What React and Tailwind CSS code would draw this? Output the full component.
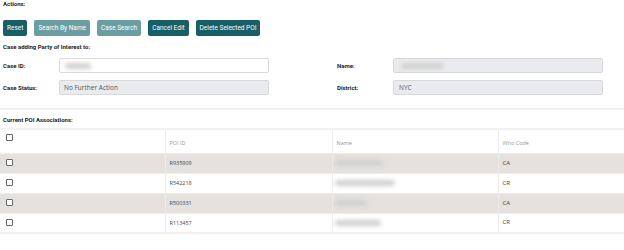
import React from "react";

const Btn = ({ children, light }) => (
  <button
    className={`h-[16px] px-[4px] rounded-[2px] text-white text-[6.5px] leading-none ${
      light ? "bg-[#6b9ea3]" : "bg-[#175e67]"
    }`}
  >
    {children}
  </button>
);

const Blur = ({ w }) => (
  <span className="inline-block align-middle h-[6px] rounded-full bg-[#d0d0d0] blur-[2px]" style={{ width: w }} />
);

const Box = () => (
  <span className="inline-block w-[7px] h-[7px] border border-[#666] rounded-[1px] bg-white" />
);

const rows = [
  { id: "R935909", n: 48, code: "CA" },
  { id: "R542218", n: 60, code: "CR" },
  { id: "R500331", n: 32, code: "CA" },
  { id: "R113457", n: 46, code: "CR" },
];

export default function App() {
  return (
    <div className="w-[624px] h-[250px] bg-white font-['Roboto',sans-serif] text-[#222] relative overflow-hidden">
      <div className="pl-[3px] pt-[1px] text-[6px] font-bold leading-[6px]">Actions:</div>
      <div className="flex gap-[7px] pl-[3px] mt-[13px]">
        <Btn>Reset</Btn>
        <Btn light>Search By Name</Btn>
        <Btn light>Case Search</Btn>
        <Btn>Cancel Edit</Btn>
        <Btn>Delete Selected POI</Btn>
      </div>
      <div className="pl-[3px] mt-[8px] text-[6px] font-bold leading-[6px]">Case adding Party of Interest to:</div>
      <div className="grid grid-cols-[56px_210px_68px_56px_210px] mt-[8px] pl-[3px] gap-y-[7px] items-center">
        <div className="text-[6px] font-bold">Case ID:</div>
        <div className="h-[15px] border border-[#dcdcdc] rounded-[2px] bg-white flex items-center pl-[5px]">
          <Blur w={26} />
        </div>
        <div />
        <div className="text-[6px] font-bold">Name:</div>
        <div className="h-[15px] border border-[#d8d8d8] rounded-[2px] bg-[#e9ebee] flex items-center pl-[7px]">
          <Blur w={42} />
        </div>
        <div className="text-[6px] font-bold">Case Status:</div>
        <div className="h-[15px] border border-[#d8d8d8] rounded-[2px] bg-[#e9ebee] flex items-center pl-[4px] text-[6.5px] text-[#555] font-['Open_Sans',sans-serif]">
          No Further Action
        </div>
        <div />
        <div className="text-[6px] font-bold">District:</div>
        <div className="h-[15px] border border-[#d8d8d8] rounded-[2px] bg-[#e9ebee] flex items-center pl-[5px] text-[6.5px] text-[#555] font-['Open_Sans',sans-serif]">
          NYC
        </div>
      </div>
      <div className="mt-[13px] h-[2px] bg-[#f2f2f2]" />
      <div className="pl-[3px] mt-[7px] text-[6px] font-bold leading-[6px]">Current POI Associations:</div>
      <table className="mt-[5px] w-[624px] border-collapse font-['Open_Sans',sans-serif] text-[5.5px] text-[#444] table-fixed">
        <colgroup>
          <col className="w-[165px]" />
          <col className="w-[167px]" />
          <col className="w-[166px]" />
          <col />
        </colgroup>
        <thead>
          <tr className="h-[24px] border-t-2 border-[#f2f2f2]">
            <th className="text-left font-normal pl-[6px] align-top pt-[4px]"><Box /></th>
            <th className="text-left font-normal pl-[4px] border-l border-[#ececec] text-[#999] pt-[3px]">POI ID</th>
            <th className="text-left font-normal pl-[4px] border-l border-[#ececec] text-[#999] pt-[3px]">Name</th>
            <th className="text-left font-normal pl-[4px] border-l border-[#ececec] text-[#999] pt-[3px]">Who Code</th>
          </tr>
        </thead>
        <tbody>
          {rows.map((r, i) => (
            <tr key={r.id} className={`h-[20px] border-t border-[#ececec] ${i % 2 === 0 ? "bg-[#e5e1de]" : "bg-white"}`}>
              <td className="pl-[6px] align-top pt-[5px] leading-none"><Box /></td>
              <td className="pl-[4px] border-l border-[#ececec]">{r.id}</td>
              <td className="pl-[2px] border-l border-[#ececec]"><Blur w={r.n} /></td>
              <td className="pl-[4px] border-l border-[#ececec] text-[6px]">{r.code}</td>
            </tr>
          ))}
          <tr className="h-0 border-t-2 border-[#f2f2f2]"><td colSpan={4} /></tr>
        </tbody>
      </table>
    </div>
  );
}
